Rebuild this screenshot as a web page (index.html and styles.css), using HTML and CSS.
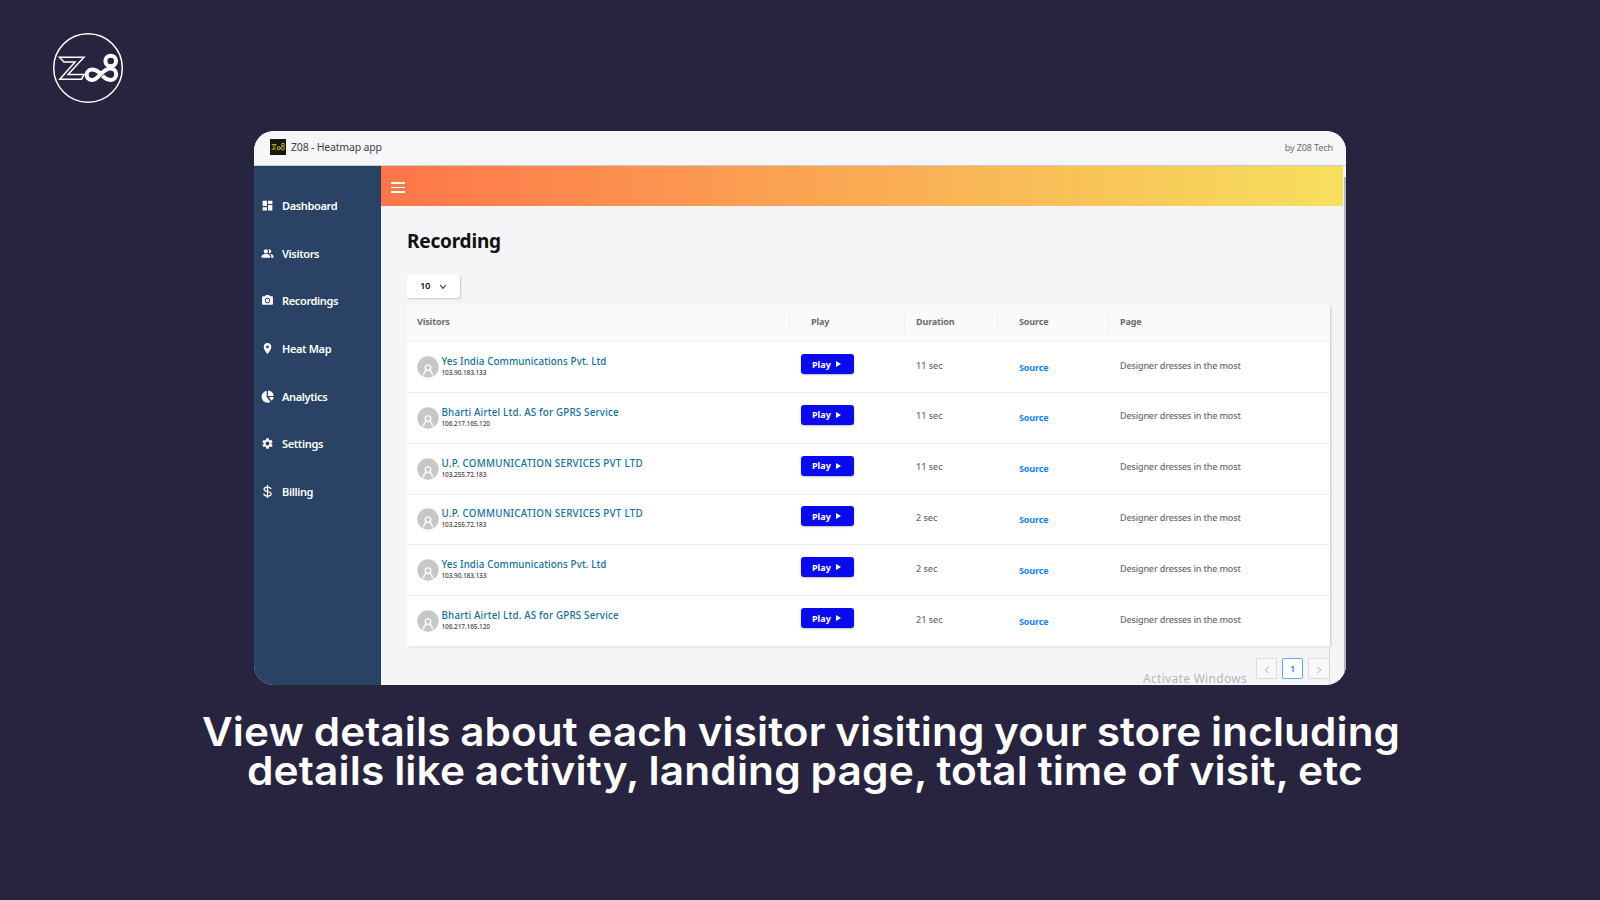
FILE: index.html
```html
<!DOCTYPE html>
<html lang="en">
<head>
<meta charset="utf-8">
<title>Z08 - Heatmap app</title>
<link rel="stylesheet" href="styles.css">
</head>
<body>
<svg width="0" height="0" class="defs">
  <symbol id="user" viewBox="0 0 22 22"><circle cx="11" cy="11" r="10.7" fill="#c7c7c7"/><g fill="none" stroke="#fff" stroke-width="1.3" stroke-linecap="round"><circle cx="11" cy="11.6" r="2.800"/><path d="M6.600 18.800c.2-2.400 1.400-3.700 2.900-4.400M15.400 18.800c-.2-2.400-1.400-3.700-2.900-4.400"/></g></symbol>
</svg>
<div class="logo">
  <svg viewBox="0 0 72 72" width="72" height="72" fill="none" stroke="#fff">
    <circle cx="36" cy="36" r="34.300" stroke-width="1.500"/>
    <path d="M7.500 25.200H32L16 42.600H32.200L29.500 47.200H7.800L23 30H12Z" stroke-width="1.500"/>
    <path d="M48 41c-3-2.500-5.500-3.500-8-3.500a5.200 5.200 0 0 0 0 10.600c6.500 0 10-11.600 18.500-11.600a5.600 5.600 0 0 1 0 11.400c-3.500 0-6-1.900-8-4" stroke-width="4"/>
    <circle cx="58.700" cy="29" r="5.300" stroke-width="4"/>
  </svg>
</div>
<main class="window">
  <header class="titlebar">
    <svg class="favicon" viewBox="0 0 16 16" width="16" height="16"><rect width="16" height="16" fill="#171710"/><g fill="none" stroke="#d2c510"><path d="M1.500 5.500h4.700L3 10h3.300M2.500 6.800h2M1.600 10.200h2" stroke-width=".8"/><circle cx="8.800" cy="9.200" r="1.500"/><circle cx="12.600" cy="9.200" r="1.700"/><circle cx="13" cy="5.700" r="1.400"/></g></svg>
    <span class="app-name">Z08 - Heatmap app</span>
    <span class="vendor">by Z08 Tech</span>
  </header>
  <div class="body">
    <nav class="sidebar">
      <a class="nav"><svg viewBox="0 0 24 24"><path d="M3 13h8V3H3v10zm0 8h8v-6H3v6zm10 0h8V11h-8v10zm0-18v6h8V3h-8z"/></svg><span>Dashboard</span></a>
      <a class="nav"><svg viewBox="0 0 24 24"><path d="M16.670 13.130C18.040 14.060 19 15.320 19 17v3h4v-3c0-2.180-3.570-3.470-6.330-3.870zM15 12c2.210 0 4-1.790 4-4s-1.790-4-4-4c-.47 0-.91.1-1.330.24a5.980 5.980 0 0 1 0 7.520c.42.14.86.24 1.330.24zM9 12c2.210 0 4-1.790 4-4s-1.790-4-4-4-4 1.790-4 4 1.790 4 4 4zm0 1c-2.670 0-8 1.340-8 4v3h16v-3c0-2.660-5.330-4-8-4z"/></svg><span>Visitors</span></a>
      <a class="nav"><svg viewBox="0 0 24 24"><circle cx="12" cy="12" r="3.200"/><path d="M9 2 7.170 4H4c-1.100 0-2 .9-2 2v12c0 1.100.9 2 2 2h16c1.100 0 2-.9 2-2V6c0-1.100-.9-2-2-2h-3.170L15 2H9zm3 15c-2.760 0-5-2.240-5-5s2.240-5 5-5 5 2.240 5 5-2.240 5-5 5z"/></svg><span>Recordings</span></a>
      <a class="nav"><svg viewBox="0 0 24 24"><path d="M12 2C8.130 2 5 5.130 5 9c0 5.250 7 13 7 13s7-7.750 7-13c0-3.870-3.130-7-7-7zm0 9.500a2.500 2.500 0 0 1 0-5 2.500 2.500 0 0 1 0 5z"/></svg><span>Heat Map</span></a>
      <a class="nav"><svg viewBox="0 0 24 24"><path d="M10.500 1.500V13l7 9A11 11 0 1 1 10.500 1.500zM13 .8A10.500 10.500 0 0 1 23.300 11H13zM14.500 13h8.800a10 10 0 0 1-3.500 7z"/></svg><span>Analytics</span></a>
      <a class="nav"><svg viewBox="0 0 24 24"><path d="M19.140 12.940c.04-.3.060-.61.060-.94s-.02-.64-.07-.94l2.030-1.580a.49.49 0 0 0 .12-.61l-1.920-3.320a.488.488 0 0 0-.59-.22l-2.390.96c-.5-.38-1.030-.7-1.620-.94l-.36-2.540a.484.484 0 0 0-.48-.41h-3.840c-.24 0-.43.170-.47.410l-.36 2.540c-.59.240-1.130.570-1.620.940l-2.390-.96c-.22-.08-.47 0-.59.220L2.740 8.870c-.12.210-.08.470.12.610l2.030 1.580c-.05.300-.09.630-.09.940s.02.640.07.940l-2.030 1.580a.49.49 0 0 0-.12.610l1.920 3.320c.12.220.37.290.59.220l2.390-.96c.5.380 1.030.7 1.620.94l.36 2.540c.05.240.24.410.48.410h3.840c.24 0 .44-.17.470-.41l.36-2.540c.59-.24 1.130-.56 1.620-.94l2.390.96c.22.080.47 0 .59-.22l1.920-3.320a.49.49 0 0 0-.12-.61l-2.010-1.580zM12 15.600a3.600 3.600 0 1 1 0-7.200 3.600 3.600 0 0 1 0 7.200z"/></svg><span>Settings</span></a>
      <a class="nav"><svg viewBox="0 0 24 24"><path d="M12 0v24M18.500 7.500C18 5 15.500 3.800 12 3.800c-3.800 0-6.300 1.600-6.300 4 0 5.700 13 2.700 13 8.400 0 2.500-2.600 4.200-6.700 4.200-4 0-6.600-1.500-7-4.400" fill="none" stroke="#fff" stroke-width="2.300"/></svg><span>Billing</span></a>
    </nav>
    <section class="main">
      <div class="topbar"><i></i><i></i><i></i></div>
      <div class="content">
        <h1>Recording</h1>
        <div class="select"><span>10</span><svg viewBox="0 0 8 6" width="8" height="6"><path d="M1.200 1 4 4.400 6.800 1" fill="none" stroke="#333" stroke-width="1.100"/></svg></div>
        <div class="table">
          <div class="row head"><span>Visitors</span><span>Play</span><span>Duration</span><span>Source</span><span>Page</span></div>
          <div class="row"><div class="visitor"><svg><use href="#user"/></svg><div><b>Yes India Communications Pvt. Ltd</b><small>103.90.183.133</small></div></div><div><button>Play<i></i></button></div><span>11 sec</span><a>Source</a><span class="page">Designer dresses in the most</span></div>
          <div class="row"><div class="visitor"><svg><use href="#user"/></svg><div><b class="bharti">Bharti Airtel Ltd. AS for GPRS Service</b><small>106.217.165.120</small></div></div><div><button>Play<i></i></button></div><span>11 sec</span><a>Source</a><span class="page">Designer dresses in the most</span></div>
          <div class="row"><div class="visitor"><svg><use href="#user"/></svg><div><b class="up">U.P. COMMUNICATION SERVICES PVT LTD</b><small>103.255.72.183</small></div></div><div><button>Play<i></i></button></div><span>11 sec</span><a>Source</a><span class="page">Designer dresses in the most</span></div>
          <div class="row"><div class="visitor"><svg><use href="#user"/></svg><div><b class="up">U.P. COMMUNICATION SERVICES PVT LTD</b><small>103.255.72.183</small></div></div><div><button>Play<i></i></button></div><span>2 sec</span><a>Source</a><span class="page">Designer dresses in the most</span></div>
          <div class="row"><div class="visitor"><svg><use href="#user"/></svg><div><b>Yes India Communications Pvt. Ltd</b><small>103.90.183.133</small></div></div><div><button>Play<i></i></button></div><span>2 sec</span><a>Source</a><span class="page">Designer dresses in the most</span></div>
          <div class="row"><div class="visitor"><svg><use href="#user"/></svg><div><b class="bharti">Bharti Airtel Ltd. AS for GPRS Service</b><small>106.217.165.120</small></div></div><div><button>Play<i></i></button></div><span>21 sec</span><a>Source</a><span class="page">Designer dresses in the most</span></div>
        </div>
        <div class="footer">
          <span class="activate">Activate Windows</span>
          <div class="pager"><span><svg viewBox="0 0 6 8"><path d="M5 1 1 4l4 3"/></svg></span><span class="on">1</span><span class="next"><svg viewBox="0 0 6 8"><path d="m1 1 4 3-4 3"/></svg></span></div>
        </div>
      </div>
    </section>
    <div class="scroll"></div>
  </div>
</main>
<div class="caption">
  <p class="line1">View details about each visitor visiting your store including</p>
  <p class="line2">details like activity, landing page, total time of visit, etc</p>
</div>
</body>
</html>
```
FILE: styles.css
```css
* { box-sizing: border-box; }
body {
  margin: 0; width: 1600px; height: 900px; overflow: hidden;
  background: #28233f; font-family: "Noto Sans", "Open Sans", sans-serif;
  white-space: nowrap; display: flex; flex-direction: column;
}
.defs { position: absolute; }
.logo { padding: 32px 0 0 52px; height: 131px; }
.logo svg { display: block; }

.window {
  width: 1092px; height: 554px; margin-left: 254px; flex: none;
  border-radius: 20px; overflow: hidden; background: #f5f5f8;
  display: flex; flex-direction: column;
}
.titlebar {
  height: 35px; flex: none; display: flex; align-items: center;
  padding: 0 13px 2px 16px; background: #f6f6f8; border-bottom: 1px solid #c9cbd2;
}
.app-name { margin-left: 5px; font-size: 10.5px; letter-spacing: -.19px; color: #414145; }
.vendor { margin-left: auto; font-size: 9px; letter-spacing: -.1px; color: #6c6d72; }
.body { flex: 1; display: flex; min-height: 0; }

.sidebar { width: 127px; flex: none; background: #2a4365; border-right: 1px solid #1f3c6c; padding-top: 15.500px; }
.nav { display: flex; align-items: center; height: 47.700px; padding-left: 7px; color: #fff; font-size: 11px; font-weight: 600; letter-spacing: -.36px; }
.nav svg { width: 13px; height: 13px; fill: #fff; margin-right: 8px; }

.main { width: 962px; flex: none; display: flex; flex-direction: column; }
.topbar {
  height: 39.500px; flex: none; background: linear-gradient(90deg, #ff754a, #f6e05e);
  padding: 16px 0 0 9.500px; display: flex; flex-direction: column; gap: 3px;
}
.topbar i { width: 14px; height: 1.500px; flex: none; background: #fff; }
.content { padding-left: 26px; flex: 1; display: flex; flex-direction: column; }
h1 { margin: 20px 0 0; height: 48.500px; font-size: 19px; line-height: 30px; font-weight: 700; letter-spacing: -.2px; color: #111; }
.select {
  width: 53px; height: 24px; background: #fff; border-radius: 3px; box-shadow: 1px 1px 2px #0003;
  display: flex; align-items: center; padding: 0 0 1px 13px; font-size: 9.500px; font-weight: 600; letter-spacing: -.4px; color: #222;
}
.select svg { margin: 3px 0 0 9px; }
.table { width: 923px; margin-top: 6px; box-shadow: 2px 1px 2px -1px #0003; background: #fff; font-size: 9px; font-weight: 500; color: #6b6b6b; }
.row {
  display: grid; grid-template-columns: 383px 115px 93px 111px 221px;
  height: 50.800px; border-bottom: 1px solid #f0f0f2; align-items: center;
}
.row > :nth-child(1) { padding-left: 10px; }
.row > :nth-child(2) { padding-left: 11px; }
.row > :nth-child(3), .row > :nth-child(5) { padding-left: 11px; }
.row > :nth-child(4) { padding-left: 21px; }
.row > span { padding-bottom: 4px; }
.row > .page { letter-spacing: -.15px; }
.row > a { color: #1283f5; font-weight: 700; letter-spacing: -.15px; }
.row.head { height: 38.200px; background: #fafafa; font-weight: 700; letter-spacing: -.15px; color: #6a6a6a; }
.head > span { height: 18px; line-height: 16px; border-right: 1px solid #eee; }
.row.head > span { padding-bottom: 0; }
.head > span:last-child { border: 0; }
.head > span:nth-child(2) { padding-left: 21px; }
.visitor { display: flex; align-items: center; }
.visitor svg { width: 22px; height: 22px; margin-right: 2.500px; }
.visitor b, .visitor small { display: block; }
.visitor b { font-size: 9.800px; line-height: 13px; font-weight: 500; letter-spacing: .1px; color: #11709f; }
.visitor .bharti { letter-spacing: .18px; }
.visitor .up { letter-spacing: .26px; }
.visitor small { font-size: 6.500px; line-height: 9px; margin-bottom: 2px; color: #3f3f3f; letter-spacing: -.1px; }
button {
  display: flex; align-items: center; width: 53px; height: 20px; margin: 0 0 6px; padding: 0 0 0 11px;
  border: 0; border-radius: 3px; background: #0a0af0; color: #fff; box-shadow: 0 1px 2px #0004;
  font: 700 9px "Noto Sans", sans-serif;
}
button i { margin-left: 5px; border: 3px solid transparent; border-left: 5px solid #fff; border-right: 0; }
.footer { width: 923px; flex: 1; display: flex; justify-content: flex-end; border-right: 1px solid #d5d5d9; }
.activate { font-size: 12px; letter-spacing: .3px; line-height: 14px; margin: 25px 9px 0 0; color: #b6b6b9; }
.pager { display: flex; gap: 5px; padding-top: 11px; }
.pager span { width: 21px; height: 21px; border: 1px solid #dcdcdf; background: #f9f9fa; display: flex; align-items: center; justify-content: center; }
.pager .on { border-color: #5aabff; background: #fff; border-radius: 2px; color: #2f7df6; font-size: 9px; font-weight: 600; }
.pager .next { border-right: 0; }
.pager svg { width: 6px; height: 8px; margin-top: 3px; fill: none; stroke: #b5b5b8; }
.scroll { width: 2px; margin: 11px 0 0 auto; background: #b5b5b9; }

.caption { padding-top: 27px; color: #fff; font: 600 40px/39px Inter, sans-serif; }
.caption p { margin: 0; width: max-content; transform-origin: 0 0; }
.line1 { margin-left: 202px !important; word-spacing: -1px; letter-spacing: .1px; transform: scaleX(1.056); }
.line2 { margin-left: 247px !important; word-spacing: -1px; letter-spacing: .1px; transform: scaleX(1.061); }
```
